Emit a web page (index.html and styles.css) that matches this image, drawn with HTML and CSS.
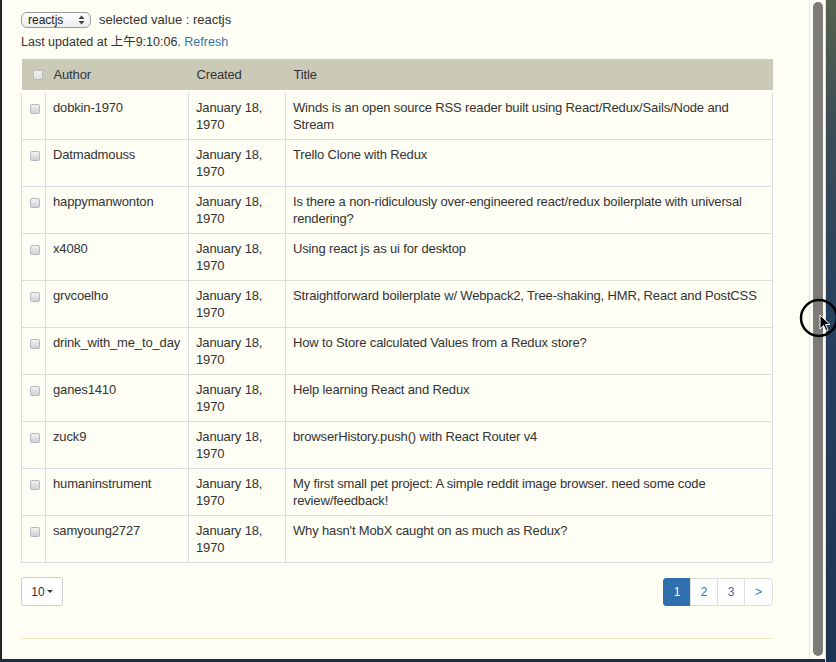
FILE: index.html
```html
<!DOCTYPE html>
<html>
<head>
<meta charset="utf-8">
<link rel="stylesheet" href="styles.css">
</head>
<body>
<div class="screen">
  <div class="window">
    <div class="content">
      <div class="picker-line">
        <span class="select">reactjs
          <svg class="sel-arrows" width="7" height="10" viewBox="0 0 7 10"><path d="M0.5 4 L3.5 0.5 L6.5 4 Z M0.5 6 L3.5 9.5 L6.5 6 Z" fill="#444"/></svg>
        </span>
        <span class="selected">selected value : reactjs</span>
      </div>
      <div class="updated">Last updated at 上午9:10:06. <a class="link">Refresh</a></div>
      <table class="grid">
        <thead>
          <tr>
            <th class="c-check"><span class="cb cb-head"></span></th>
            <th class="c-author">Author</th>
            <th class="c-created">Created</th>
            <th class="c-title">Title</th>
          </tr>
        </thead>
        <tbody>
          <tr><td class="c-check"><span class="cb"></span></td><td>dobkin-1970</td><td>January 18, 1970</td><td>Winds is an open source RSS reader built using React/Redux/Sails/Node and Stream</td></tr>
          <tr><td class="c-check"><span class="cb"></span></td><td>Datmadmouss</td><td>January 18, 1970</td><td>Trello Clone with Redux</td></tr>
          <tr><td class="c-check"><span class="cb"></span></td><td>happymanwonton</td><td>January 18, 1970</td><td>Is there a non-ridiculously over-engineered react/redux boilerplate with universal rendering?</td></tr>
          <tr><td class="c-check"><span class="cb"></span></td><td>x4080</td><td>January 18, 1970</td><td>Using react js as ui for desktop</td></tr>
          <tr><td class="c-check"><span class="cb"></span></td><td>grvcoelho</td><td>January 18, 1970</td><td>Straightforward boilerplate w/ Webpack2, Tree-shaking, HMR, React and PostCSS</td></tr>
          <tr><td class="c-check"><span class="cb"></span></td><td>drink_with_me_to_day</td><td>January 18, 1970</td><td>How to Store calculated Values from a Redux store?</td></tr>
          <tr><td class="c-check"><span class="cb"></span></td><td>ganes1410</td><td>January 18, 1970</td><td>Help learning React and Redux</td></tr>
          <tr><td class="c-check"><span class="cb"></span></td><td>zuck9</td><td>January 18, 1970</td><td>browserHistory.push() with React Router v4</td></tr>
          <tr><td class="c-check"><span class="cb"></span></td><td>humaninstrument</td><td>January 18, 1970</td><td>My first small pet project: A simple reddit image browser. need some code review/feedback!</td></tr>
          <tr><td class="c-check"><span class="cb"></span></td><td>samyoung2727</td><td>January 18, 1970</td><td>Why hasn't MobX caught on as much as Redux?</td></tr>
        </tbody>
      </table>
      <div class="footer">
        <span class="size-btn">10 <span class="caret"></span></span>
        <div class="pager">
          <span class="pg active">1</span><span class="pg">2</span><span class="pg">3</span><span class="pg">&gt;</span>
        </div>
      </div>
      <div class="rule"></div>
    </div>
  </div>
  <div class="scroll"><div class="thumb"></div></div>
  <div class="desktop"></div>
  <div class="cursor">
    <svg width="44" height="44" viewBox="0 0 44 44">
      <circle cx="20" cy="20" r="18" fill="none" stroke="#000" stroke-width="2.5"/>
      <path d="M21 17 L21 31 L24.5 27.5 L27 33 L29 32 L26.5 26.5 L31 26.5 Z" fill="#000" stroke="#fff" stroke-width="1"/>
    </svg>
  </div>
</div>
</body>
</html>
```
FILE: styles.css
```css
html, body {
  margin: 0;
  padding: 0;
}
body {
  width: 836px;
  height: 662px;
  overflow: hidden;
  background: #1c2f48;
  font-family: "Liberation Sans", Arial, "Noto Sans CJK SC", sans-serif;
  font-size: 13px;
  color: #333;
}
.screen {
  position: relative;
  display: flex;
  width: 836px;
  height: 662px;
}
.window {
  width: 809px;
  height: 659px;
  background: #fefef5;
  border-left: 2px solid #222;
  box-sizing: border-box;
}
.content {
  width: 752px;
  margin-left: 19px;
  padding-top: 11px;
}
.picker-line {
  display: flex;
  align-items: center;
  gap: 8px;
  height: 17px;
}
.select {
  display: flex;
  align-items: center;
  justify-content: space-between;
  width: 70px;
  height: 16px;
  box-sizing: border-box;
  padding: 0 5px 0 6px;
  border: 1px solid #9a9a9a;
  border-radius: 6px;
  background: linear-gradient(#ffffff, #ececec);
  font-size: 12px;
  color: #222;
}
.updated {
  margin-top: 6px;
  height: 17px;
  line-height: 17px;
  font-size: 12.5px;
}
.link {
  color: #3b72a8;
}
.grid {
  margin-top: 8px;
  width: 752px;
  border-collapse: collapse;
  table-layout: fixed;
  letter-spacing: -0.15px;
}
.grid th {
  background: #cbcab7;
  font-weight: normal;
  text-align: left;
  height: 31px;
  padding: 0 8px;
  border-bottom: 3px solid #fefef5;
  color: #333;
}
.grid th.c-check { width: 8px; }
.grid th.c-author { width: 127px; }
.grid th.c-created { width: 81px; }
.grid td {
  border: 1px solid #dcdce0;
  padding: 6px 7px 6px 7px;
  line-height: 17px;
  height: 34px;
  vertical-align: top;
  box-sizing: content-box;
}
.grid td.c-check {
  padding: 0;
}
.cb {
  display: block;
  width: 8px;
  height: 8px;
  margin: 11px 0 0 8px;
  border: 1px solid #b8b8c0;
  border-radius: 2px;
  background: linear-gradient(#f2f2f2, #d0d0d6);
}
.cb-head {
  margin: 0 0 0 3px;
  background: linear-gradient(#f4f4f0, #dedede);
}
.footer {
  display: flex;
  justify-content: space-between;
  align-items: center;
  margin-top: 14px;
}
.size-btn {
  display: flex;
  align-items: center;
  justify-content: center;
  gap: 2px;
  width: 42px;
  height: 29px;
  box-sizing: border-box;
  border: 1px solid #ccc;
  border-radius: 3px;
  background: #fff;
  font-size: 12px;
}
.caret {
  width: 0;
  height: 0;
  border-left: 3px solid transparent;
  border-right: 3px solid transparent;
  border-top: 3px solid #333;
}
.pager {
  display: flex;
}
.pg {
  display: flex;
  align-items: center;
  justify-content: center;
  width: 28px;
  height: 28px;
  box-sizing: border-box;
  border: 1px solid #ddd;
  margin-left: -1px;
  background: #fff;
  color: #3b72a8;
  font-size: 12px;
}
.pg:last-child {
  width: 29px;
  border-radius: 0 4px 4px 0;
}
.pg.active {
  background: #2f6fad;
  border-color: #2f6fad;
  color: #fff;
  border-radius: 3px 0 0 3px;
}
.rule {
  margin-top: 32px;
  height: 1px;
  background: #ebe9bd;
}
.scroll {
  width: 16px;
  height: 659px;
  background: #fdfdf6;
  border-left: 1px solid #e4e4e4;
  box-sizing: border-box;
  padding: 2px 2px 3px 3px;
}
.thumb {
  width: 10px;
  height: 100%;
  background: #7c7b78;
  border-radius: 5px;
}
.desktop {
  flex: 1;
  height: 662px;
  background: linear-gradient(#55614c 0%, #3a4c56 20%, #24405e 50%, #1d3452 100%);
  border-left: 1px solid #ddd;
}
.cursor {
  position: absolute;
  left: 799px;
  top: 298px;
}
```
